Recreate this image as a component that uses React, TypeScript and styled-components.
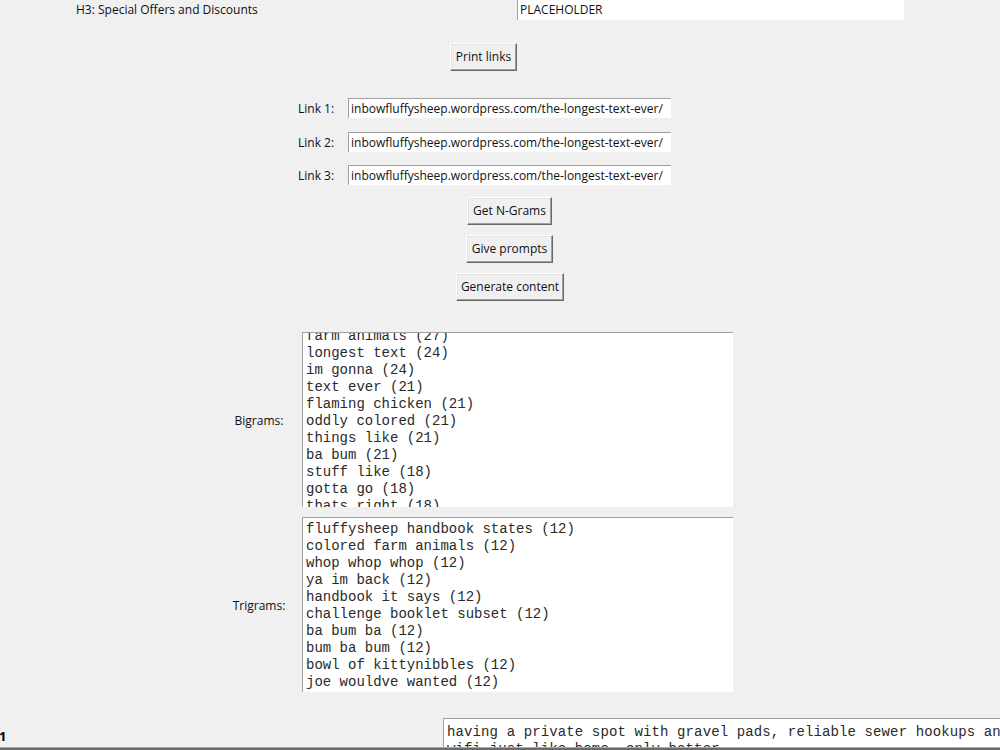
import styled, { createGlobalStyle } from "styled-components";

const GlobalStyle = createGlobalStyle`
  html, body {
    margin: 0;
    padding: 0;
    background: #f0f0f0;
    overflow: hidden;
  }
`;

const Page = styled.div`
  width: 1000px;
  height: 750px;
  display: flex;
  flex-direction: column;
  overflow: hidden;
  background: #f0f0f0;
  font-family: "Open Sans", "Noto Sans", sans-serif;
  font-size: 12px;
  line-height: 16px;
  color: #111;
`;

const TopRow = styled.div`
  display: grid;
  grid-template-columns: 517px 387px;
  height: 19px;
  align-items: center;
`;

const TopLabel = styled.span`
  padding-left: 76px;
  margin-top: -1px;
  white-space: nowrap;
`;

const Entry = styled.div<{ $w: number }>`
  box-sizing: border-box;
  width: ${(p) => p.$w}px;
  height: 20px;
  background: #fff;
  border-top: 1px solid #a0a0a0;
  border-left: 1px solid #a0a0a0;
  padding: 0 2px;
  display: flex;
  align-items: center;
  white-space: nowrap;
  overflow: hidden;
`;

const TopEntry = styled(Entry)`
  align-self: end;
  border-top: none;
  padding-bottom: 1px;
`;

const ButtonRow = styled.div<{ $indent: number; $gap: number }>`
  display: flex;
  padding-left: ${(p) => p.$indent}px;
  margin-top: ${(p) => p.$gap}px;
`;

const Button = styled.button<{ $w: number }>`
  box-sizing: border-box;
  width: ${(p) => p.$w}px;
  height: 28px;
  padding: 0;
  background: #f0f0f0;
  font: inherit;
  color: #111;
  white-space: nowrap;
  border: 1px solid;
  border-color: #fff #696969 #696969 #fff;
  box-shadow: inset -1px -1px 0 #a0a0a0, inset 1px 1px 0 #e3e3e3;
`;

const LinkRow = styled.div<{ $gap: number }>`
  display: grid;
  grid-template-columns: 298px 50px 323px;
  align-items: center;
  margin-top: ${(p) => p.$gap}px;
`;

const LinkLabel = styled.span`
  grid-column: 2;
  padding-top: 2px;
  white-space: nowrap;
`;

const NGramRow = styled.div<{ $gap: number }>`
  display: grid;
  grid-template-columns: 228px 62px 431px;
  column-gap: 12px;
  align-items: center;
  margin-top: ${(p) => p.$gap}px;
  margin-left: -12px;
`;

const NGramLabel = styled.span`
  grid-column: 2;
  padding-top: 2px;
  text-align: center;
`;

const TextBox = styled.div`
  box-sizing: border-box;
  height: 175px;
  background: #fff;
  border-top: 1px solid #a0a0a0;
  border-left: 1px solid #a0a0a0;
  overflow: hidden;
  padding: 3px 3px 0;
  font-family: "Liberation Mono", "Courier New", monospace;
  font-size: 14px;
  line-height: 17px;
  color: #2a2a2a;
  white-space: pre;
`;

const Lines = styled.div<{ $scroll: number }>`
  margin-top: ${(p) => -p.$scroll}px;
`;

const BottomRow = styled.div`
  display: grid;
  grid-template-columns: 443px 1fr;
  height: 29px;
  margin-top: 26px;
`;

const PageNumber = styled.span`
  align-self: end;
  padding-bottom: 3px;
  margin-left: -1px;
  font-weight: 700;
  font-size: 13px;
  color: #000;
`;

const Output = styled.div`
  width: 620px;
  background: #fff;
  border-top: 1px solid #a0a0a0;
  border-left: 1px solid #a0a0a0;
  overflow: hidden;
  padding: 5px 3px 0;
  font-family: "Liberation Mono", "Courier New", monospace;
  font-size: 14px;
  line-height: 17px;
  letter-spacing: 0.12px;
  color: #2a2a2a;
  white-space: pre;
`;

const BottomBar = styled.div`
  height: 3px;
  background: #6a6a6a;
  border-top: 1px solid #a8a8a8;
  box-sizing: border-box;
`;

const url = "inbowfluffysheep.wordpress.com/the-longest-text-ever/";

const bigrams = [
  "farm animals (27)",
  "longest text (24)",
  "im gonna (24)",
  "text ever (21)",
  "flaming chicken (21)",
  "oddly colored (21)",
  "things like (21)",
  "ba bum (21)",
  "stuff like (18)",
  "gotta go (18)",
  "thats right (18)",
];

const trigrams = [
  "fluffysheep handbook states (12)",
  "colored farm animals (12)",
  "whop whop whop (12)",
  "ya im back (12)",
  "handbook it says (12)",
  "challenge booklet subset (12)",
  "ba bum ba (12)",
  "bum ba bum (12)",
  "bowl of kittynibbles (12)",
  "joe wouldve wanted (12)",
];

const links = [
  { label: "Link 1:", gap: 27 },
  { label: "Link 2:", gap: 14 },
  { label: "Link 3:", gap: 13 },
];

export default function App() {
  return (
    <>
      <GlobalStyle />
      <Page>
        <TopRow>
          <TopLabel>H3: Special Offers and Discounts</TopLabel>
          <TopEntry $w={387}>PLACEHOLDER</TopEntry>
        </TopRow>

        <ButtonRow $indent={450} $gap={24}>
          <Button $w={67}>Print links</Button>
        </ButtonRow>

        {links.map((l) => (
          <LinkRow key={l.label} $gap={l.gap}>
            <LinkLabel>{l.label}</LinkLabel>
            <Entry $w={323}>{url}</Entry>
          </LinkRow>
        ))}

        <ButtonRow $indent={467} $gap={12}>
          <Button $w={85}>Get N-Grams</Button>
        </ButtonRow>
        <ButtonRow $indent={466} $gap={10}>
          <Button $w={87}>Give prompts</Button>
        </ButtonRow>
        <ButtonRow $indent={456} $gap={10}>
          <Button $w={108}>Generate content</Button>
        </ButtonRow>

        <NGramRow $gap={31}>
          <NGramLabel>Bigrams:</NGramLabel>
          <TextBox>
            <Lines $scroll={8}>{bigrams.join("\n")}</Lines>
          </TextBox>
        </NGramRow>
        <NGramRow $gap={10}>
          <NGramLabel>Trigrams:</NGramLabel>
          <TextBox>
            <Lines $scroll={0}>{trigrams.join("\n")}</Lines>
          </TextBox>
        </NGramRow>

        <BottomRow>
          <PageNumber>1</PageNumber>
          <Output>
            {"having a private spot with gravel pads, reliable sewer hookups and\nwifi just like home, only better."}
          </Output>
        </BottomRow>
        <BottomBar />
      </Page>
    </>
  );
}
